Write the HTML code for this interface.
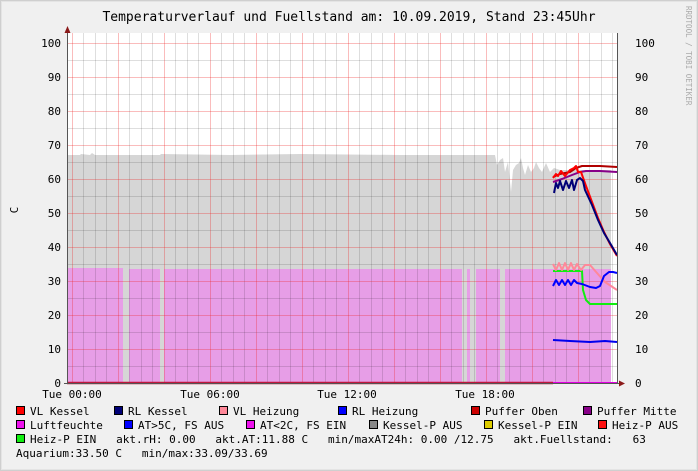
<!DOCTYPE html>
<html><head><meta charset="utf-8"><style>
body{margin:0;background:#f0f0f0;}
svg{display:block;font-family:"DejaVu Sans Mono","Liberation Mono",monospace;}
</style></head><body>
<svg width="698" height="471" viewBox="0 0 698 471" xmlns="http://www.w3.org/2000/svg">
<rect x="0" y="0" width="698" height="471" fill="#f0f0f0"/>
<rect x="0.5" y="0.5" width="697" height="470" fill="none" stroke="#cfcfcf"/>
<rect x="1.5" y="1.5" width="695" height="468" fill="none" stroke="#e4e4e4"/>
<text x="349" y="21" font-size="13" text-anchor="middle" fill="#000">Temperaturverlauf und Fuellstand am: 10.09.2019, Stand 23:45Uhr</text>
<text transform="translate(686,6) rotate(90)" font-size="7.5" fill="#aaa">RRDTOOL / TOBI OETIKER</text>
<text transform="translate(18,210) rotate(-90)" font-size="11" text-anchor="middle">C</text>
<rect x="67" y="33" width="550" height="350" fill="#fff"/>
<path d="M67,383 L67,155 L80,155 L81,154 L90,155 L92,153 L95,155 L160,155 L161,154 L230,155 L300,154 L400,155 L495,155 L497,165 L500,160 L503,158 L505,172 L508,162 L511,192 L513,170 L516,165 L519,163 L521,158 L523,168 L525,175 L528,165 L531,172 L534,168 L536,162 L539,168 L542,172 L546,163 L550,172 L554,168 L560,170 L611,170 L611,383 Z" fill="#d6d6d6"/>
<g fill="#e79ee7">
<rect x="67" y="268" width="56" height="115"/>
<rect x="129" y="269" width="31" height="114"/>
<rect x="164" y="269" width="298" height="114"/>
<rect x="467" y="269" width="3" height="114"/>
<rect x="476" y="269" width="24" height="114"/>
<rect x="505" y="269" width="106" height="114"/>
</g>
<g stroke="#000" stroke-opacity="0.13" stroke-width="1">
<path d="M67,366.5H617M67,332.5H617M67,298.5H617M67,264.5H617M67,230.5H617M67,196.5H617M67,162.5H617M67,128.5H617M67,94.5H617M67,60.5H617"/>
<path d="M83.5,33V383M95.5,33V383M106.5,33V383M129.5,33V383M141.5,33V383M152.5,33V383M175.5,33V383M187.5,33V383M198.5,33V383M221.5,33V383M233.5,33V383M244.5,33V383M267.5,33V383M279.5,33V383M290.5,33V383M313.5,33V383M325.5,33V383M336.5,33V383M359.5,33V383M371.5,33V383M382.5,33V383M405.5,33V383M417.5,33V383M428.5,33V383M451.5,33V383M463.5,33V383M474.5,33V383M497.5,33V383M509.5,33V383M520.5,33V383M543.5,33V383M555.5,33V383M566.5,33V383M589.5,33V383M601.5,33V383M612.5,33V383"/>
</g>
<g stroke="#e22" stroke-opacity="0.3" stroke-width="1">
<path d="M67,349.5H617M67,315.5H617M67,281.5H617M67,247.5H617M67,213.5H617M67,179.5H617M67,145.5H617M67,111.5H617M67,77.5H617M67,43.5H617"/>
<path d="M72.5,33V383M118.5,33V383M164.5,33V383M210.5,33V383M256.5,33V383M302.5,33V383M348.5,33V383M394.5,33V383M440.5,33V383M486.5,33V383M532.5,33V383M578.5,33V383"/>
</g>
<g fill="none" stroke-width="2" stroke-linejoin="round">
<path d="M553,340 L570,341 L590,342 L605,341 L617,342" stroke="#0000ee"/>
<path d="M553,271 L582,271 L583,290 L586,300 L590,304 L617,304" stroke="#11ee11"/>
<path d="M553,264 L556,270 L559,263 L562,270 L565,263 L568,270 L571,263 L574,270 L577,264 L581,270 L585,265 L590,265 L597,273 L605,282 L617,290" stroke="#ff8899"/>
<path d="M553,286 L556,280 L559,285 L562,280 L565,285 L568,280 L571,285 L574,280 L577,283 L582,284 L590,287 L596,288 L600,286 L604,276 L609,272 L613,272 L617,273" stroke="#0000ff"/>
<path d="M553,182 L562,179 L572,175 L580,172 L586,171 L600,171 L617,172" stroke="#880088"/>
<path d="M553,177 L560,174 L570,172 L576,168 L582,166 L600,166 L617,167" stroke="#b00000"/>
<path d="M553,178 L556,174 L558,176 L561,171 L565,176 L570,170 L574,168 L576,166 L578,172 L581,172 L586,186 L592,202 L598,218 L604,232 L610,244 L617,256" stroke="#ff0000"/>
<path d="M554,193 L556,183 L558,188 L560,181 L563,190 L566,181 L569,188 L572,180 L574,190 L577,180 L580,178 L583,181 L585,190 L592,205 L598,220 L604,233 L610,243 L617,255" stroke="#000077"/>
</g>
<path d="M67,383H553" stroke="#c0163d" stroke-width="2.5"/>
<path d="M553,383H617" stroke="#e000e0" stroke-width="2"/>
<path d="M67.5,384V30M617.5,384V33" stroke="#555" stroke-width="1"/>
<path d="M64,383.5H622" stroke="#555"/>
<path d="M67.5,26L64.5,33H70.5Z" fill="#8b1a1a"/>
<path d="M625,383.5L619,380.5V386.5Z" fill="#8b1a1a"/>
<g font-size="11" fill="#000">
<g text-anchor="end">
<text x="61" y="387">0</text><text x="61" y="353">10</text><text x="61" y="319">20</text><text x="61" y="285">30</text><text x="61" y="251">40</text><text x="61" y="217">50</text><text x="61" y="183">60</text><text x="61" y="149">70</text><text x="61" y="115">80</text><text x="61" y="81">90</text><text x="61" y="47">100</text>
</g>
<g>
<text x="635" y="387">0</text><text x="635" y="353">10</text><text x="635" y="319">20</text><text x="635" y="285">30</text><text x="635" y="251">40</text><text x="635" y="217">50</text><text x="635" y="183">60</text><text x="635" y="149">70</text><text x="635" y="115">80</text><text x="635" y="81">90</text><text x="635" y="47">100</text>
</g>
<g text-anchor="middle">
<text x="72" y="398">Tue 00:00</text><text x="210" y="398">Tue 06:00</text><text x="347" y="398">Tue 12:00</text><text x="485" y="398">Tue 18:00</text>
</g>
<g stroke="#000" stroke-width="1">
<rect x="16.5" y="406.5" width="8" height="8" fill="#ff0000"/>
<rect x="114.5" y="406.5" width="8" height="8" fill="#000077"/>
<rect x="219.5" y="406.5" width="8" height="8" fill="#ff8899"/>
<rect x="338.5" y="406.5" width="8" height="8" fill="#0000ff"/>
<rect x="471.5" y="406.5" width="8" height="8" fill="#cc0000"/>
<rect x="583.5" y="406.5" width="8" height="8" fill="#880088"/>
<rect x="16.5" y="420.5" width="8" height="8" fill="#ee11ee"/>
<rect x="124.5" y="420.5" width="8" height="8" fill="#0000ff"/>
<rect x="246.5" y="420.5" width="8" height="8" fill="#ee11ee"/>
<rect x="369.5" y="420.5" width="8" height="8" fill="#888888"/>
<rect x="484.5" y="420.5" width="8" height="8" fill="#ddcc00"/>
<rect x="598.5" y="420.5" width="8" height="8" fill="#ff1111"/>
<rect x="16.5" y="434.5" width="8" height="8" fill="#11ee11"/>
</g>
<text x="30" y="415">VL Kessel</text>
<text x="128" y="415">RL Kessel</text>
<text x="233" y="415">VL Heizung</text>
<text x="352" y="415">RL Heizung</text>
<text x="485" y="415">Puffer Oben</text>
<text x="597" y="415">Puffer Mitte</text>
<text x="30" y="429">Luftfeuchte</text>
<text x="138" y="429">AT&gt;5C, FS AUS</text>
<text x="260" y="429">AT&lt;2C, FS EIN</text>
<text x="383" y="429">Kessel-P AUS</text>
<text x="498" y="429">Kessel-P EIN</text>
<text x="612" y="429">Heiz-P AUS</text>
<text x="30" y="443" xml:space="preserve">Heiz-P EIN   akt.rH: 0.00   akt.AT:11.88 C   min/maxAT24h: 0.00 /12.75   akt.Fuellstand:   63</text>
<text x="16" y="457" xml:space="preserve">Aquarium:33.50 C   min/max:33.09/33.69</text>
</g>
</svg>
</body></html>
